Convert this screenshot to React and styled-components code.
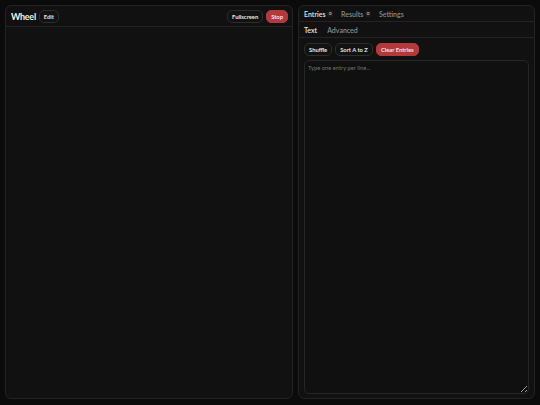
import React, {useState} from "react";
import styled, {createGlobalStyle} from "styled-components";

const GlobalStyle = createGlobalStyle`
    html, body {
        margin: 0;
        padding: 0;
        background: #0b0b0b;
        font-family: Lato, "Noto Sans", sans-serif;
        color: #e8e8e8;
    }
    * {
        box-sizing: border-box;
    }
`;

function App() {
    const [tab, setTab] = useState("entries");
    const [subTab, setSubTab] = useState("text");
    const [text, setText] = useState("");

    return (
        <>
            <GlobalStyle/>
            <Page>
                <Panel>
                    <WheelHeader>
                        <Title>Wheel</Title>
                        <Button>Edit</Button>
                        <Spacer/>
                        <Button>Fullscreen</Button>
                        <Button $danger>Stop</Button>
                    </WheelHeader>
                    <WheelArea/>
                </Panel>
                <Panel>
                    <TabRow>
                        <Tab $active={tab === "entries"} onClick={() => setTab("entries")}>
                            Entries <Badge>0</Badge>
                        </Tab>
                        <Tab $active={tab === "results"} onClick={() => setTab("results")}>
                            Results <Badge>0</Badge>
                        </Tab>
                        <Tab $active={tab === "settings"} onClick={() => setTab("settings")}>
                            Settings
                        </Tab>
                    </TabRow>
                    <SubTabRow>
                        <SubTab $active={subTab === "text"} onClick={() => setSubTab("text")}>Text</SubTab>
                        <SubTab $active={subTab === "advanced"} onClick={() => setSubTab("advanced")}>Advanced</SubTab>
                    </SubTabRow>
                    <EntriesBody>
                        <Actions>
                            <Button>Shuffle</Button>
                            <Button>Sort A to Z</Button>
                            <Button $danger onClick={() => setText("")}>Clear Entries</Button>
                        </Actions>
                        <EntryInput value={text}
                                    onChange={(e) => setText(e.target.value)}
                                    placeholder="Type one entry per line..."/>
                    </EntriesBody>
                </Panel>
            </Page>
        </>
    )
}

const Page = styled.div`
    display: grid;
    grid-template-columns: 288px 1fr;
    gap: 5px;
    padding: 5px;
    height: 100vh;
`;

const Panel = styled.div`
    display: flex;
    flex-direction: column;
    min-height: 0;
    background: #111111;
    border: 1px solid #232323;
    border-radius: 6px;
    margin-bottom: 1px;
`;

const WheelHeader = styled.div`
    display: flex;
    align-items: center;
    gap: 3px;
    height: 21px;
    padding: 0 4px 0 5px;
    border-bottom: 1px solid #232323;
`;

const Title = styled.span`
    font-size: 9px;
    font-weight: 700;
    letter-spacing: -0.3px;
    color: #f2f2f2;
`;

const Spacer = styled.div`
    flex: 1;
`;

const WheelArea = styled.div`
    flex: 1;
`;

const Button = styled.button`
    font-family: Lato, "Noto Sans", sans-serif;
    font-size: 5.8px;
    font-weight: 700;
    height: 13px;
    padding: 0 4px;
    border-radius: 5px;
    border: 1px solid ${p => p.$danger ? "#b3393b" : "#2c2c2c"};
    background: ${p => p.$danger ? "#b3393b" : "#121212"};
    color: ${p => p.$danger ? "#f6e2e2" : "#e4e4e4"};
    cursor: pointer;
`;

const TabRow = styled.div`
    display: flex;
    align-items: center;
    gap: 8px;
    height: 16px;
    padding: 0 5px;
    border-bottom: 1px solid #232323;
`;

const Tab = styled.div`
    display: flex;
    align-items: center;
    gap: 2px;
    font-size: 7px;
    font-weight: 600;
    color: ${p => p.$active ? "#e6e6e6" : "#8a8a8a"};
    cursor: pointer;
`;

const Badge = styled.span`
    font-size: 4.5px;
    font-weight: 700;
    color: #b5b5b5;
    background: #1d1d1d;
    border-radius: 2px;
    padding: 0 1.5px;
    line-height: 6px;
`;

const SubTabRow = styled.div`
    display: flex;
    align-items: center;
    gap: 10px;
    height: 16px;
    padding: 0 5px;
    border-bottom: 1px solid #232323;
`;

const SubTab = styled.div`
    font-size: 7px;
    font-weight: 600;
    color: ${p => p.$active ? "#e6e6e6" : "#8a8a8a"};
    cursor: pointer;
`;

const EntriesBody = styled.div`
    flex: 1;
    display: flex;
    flex-direction: column;
    gap: 4px;
    padding: 5px 5px 4px 5px;
    min-height: 0;
`;

const Actions = styled.div`
    display: flex;
    gap: 3px;
`;

const EntryInput = styled.textarea`
    flex: 1;
    width: 100%;
    background: #101010;
    border: 1px solid #262626;
    border-radius: 5px;
    padding: 3px;
    color: #e4e4e4;
    font-family: Lato, "Noto Sans", sans-serif;
    font-size: 5.8px;
    outline: none;

    &::placeholder {
        color: #707070;
    }
`;

export default App
